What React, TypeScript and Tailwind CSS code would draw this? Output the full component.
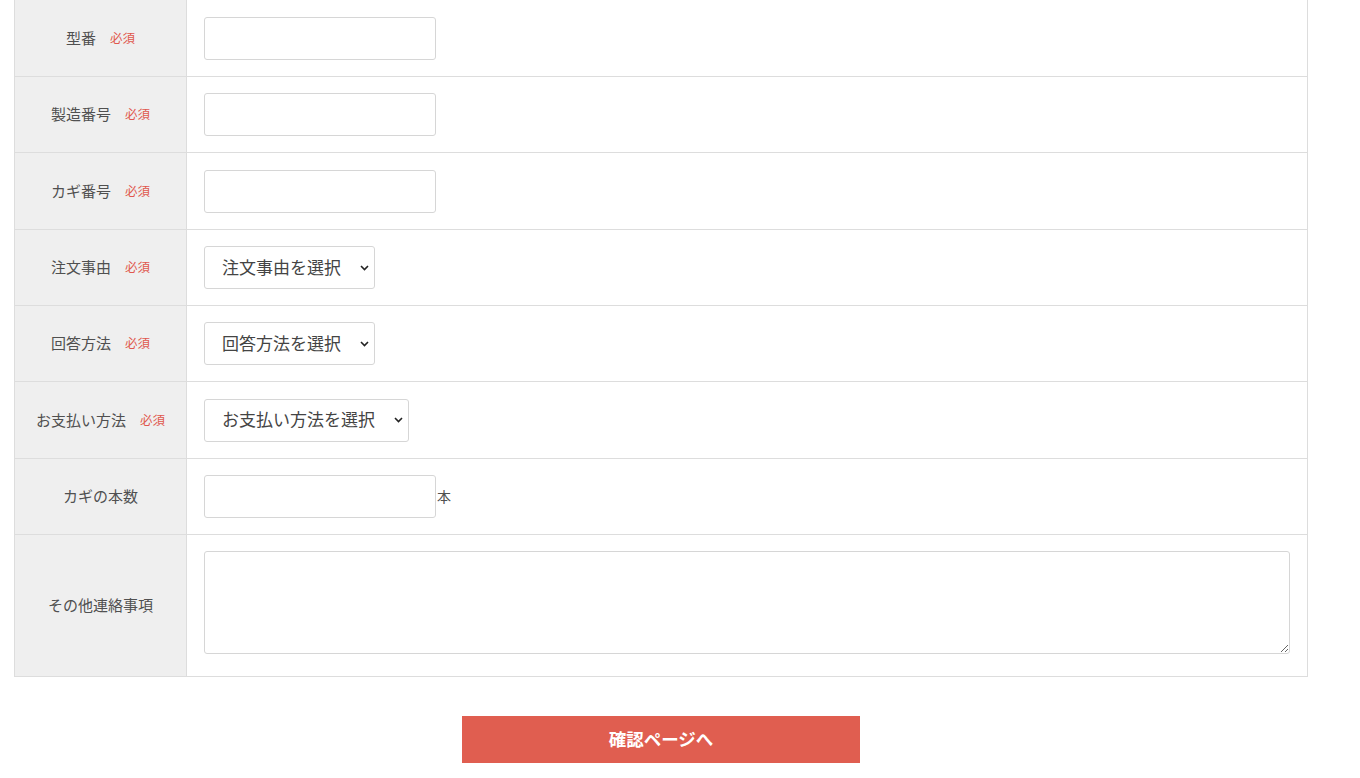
import React from 'react';

const FONT = "font-['Noto_Sans_CJK_JP','Noto_Sans',sans-serif]";

interface RowProps {
    label: string;
    required?: boolean;
    children: React.ReactNode;
    height: string;
    top?: boolean;
}

function Row({ label, required, children, height, top }: RowProps) {
    return (
        <div className={`flex border-b border-[#dddddd] ${height}`}>
            <div className="w-[172px] shrink-0 bg-[#efefef] border-r border-[#dddddd] flex items-center justify-center gap-[14px]">
                <span className="text-[15px] text-[#505050]">{label}</span>
                {required && <span className="text-[12.5px] text-[#e0584d]">必須</span>}
            </div>
            <div className={`flex-1 flex px-[17px] ${top ? 'items-start pt-[16px]' : 'items-center'}`}>
                {children}
            </div>
        </div>
    );
}

function TextInput() {
    return (
        <input
            type="text"
            className="w-[232px] h-[43px] border border-[#d6d6d6] rounded-[3px] bg-white px-3 text-[16px] outline-none"
        />
    );
}

function Select({ placeholder, width }: { placeholder: string; width: string }) {
    return (
        <div className={`relative ${width} h-[43px]`}>
            <select className="appearance-none w-full h-full border border-[#d6d6d6] rounded-[3px] bg-white pl-[17px] pr-6 pb-[2px] text-[17px] text-[#444444] outline-none">
                <option>{placeholder}</option>
            </select>
            <svg
                className="absolute right-[6px] top-1/2 -translate-y-1/2 pointer-events-none"
                width="9"
                height="6"
                viewBox="0 0 9 6"
                fill="none"
            >
                <path d="M1 1l3.5 3.5L8 1" stroke="#222" strokeWidth="1.6" />
            </svg>
        </div>
    );
}

export default function App() {
    return (
        <div className={`${FONT} bg-white min-h-[778px] w-[1360px] overflow-hidden`}>
            <div className="ml-[14px] w-[1294px]">
                <div className="border-x border-[#dddddd]">
                    <Row label="型番" required height="h-[77px]">
                        <TextInput />
                    </Row>
                    <Row label="製造番号" required height="h-[76px]">
                        <TextInput />
                    </Row>
                    <Row label="カギ番号" required height="h-[77px]">
                        <TextInput />
                    </Row>
                    <Row label="注文事由" required height="h-[76px]">
                        <Select placeholder="注文事由を選択" width="w-[171px]" />
                    </Row>
                    <Row label="回答方法" required height="h-[76px]">
                        <Select placeholder="回答方法を選択" width="w-[171px]" />
                    </Row>
                    <Row label="お支払い方法" required height="h-[77px]">
                        <Select placeholder="お支払い方法を選択" width="w-[205px]" />
                    </Row>
                    <Row label="カギの本数" height="h-[76px]">
                        <TextInput />
                        <span className="text-[14px] text-[#505050] ml-[1px]">本</span>
                    </Row>
                    <Row label="その他連絡事項" height="h-[142px]" top>
                        <textarea className="w-full h-[103px] border border-[#d6d6d6] rounded-[3px] bg-white px-3 py-2 text-[16px] outline-none resize-y" />
                    </Row>
                </div>

                {/* Submit */}
                <div className="flex justify-center mt-[39px]">
                    <button className="w-[398px] h-[47px] bg-[#e05e50] text-white text-[17.5px] font-bold">
                        確認ページへ
                    </button>
                </div>
            </div>
        </div>
    );
}
